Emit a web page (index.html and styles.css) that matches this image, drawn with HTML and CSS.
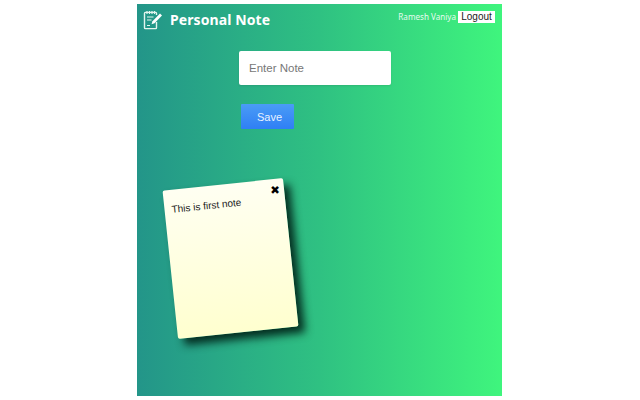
FILE: index.html
```html
<!DOCTYPE html>
<html lang="en">
<head>
<meta charset="utf-8">
<title>Personal Note</title>
<link rel="stylesheet" href="styles.css">
</head>
<body>
<main class="panel">
  <header class="top">
    <div class="brand">
      <svg class="logo" viewBox="0 0 20 20" width="20" height="20" aria-hidden="true">
        <path d="M13.5 5V3.2a.8.8 0 0 0-.8-.8H2.3a.8.8 0 0 0-.8.8v14.6a.8.8 0 0 0 .8.8h10.4a.8.8 0 0 0 .8-.8V12" fill="none" stroke="#e4f5ee" stroke-width="1.4"/>
        <path d="M4 1v3M6.5 1v3M9 1v3M11.500 1v3M4 7h6.500M4 10h4.500M4 15.500h3" fill="none" stroke="#e4f5ee" stroke-width="1.200"/>
        <path d="M17 3.500l2 2-7.500 7.800-3 1 1-3z" fill="#fff"/>
      </svg>
      <h1 class="title">Personal Note</h1>
    </div>
    <div class="user">
      <span class="name">Ramesh Vaniya</span>
      <a class="logout">Logout</a>
    </div>
  </header>
  <form class="form">
    <input class="field" type="text" placeholder="Enter Note">
    <button class="save" type="button">Save</button>
  </form>
  <article class="note">
    <span class="close">✖</span>
    <p class="text">This is first note</p>
  </article>
</main>
</body>
</html>
```
FILE: styles.css
```css
html, body { margin: 0; padding: 0; height: 400px; overflow: hidden; background: #fff; }
body { font-family: "Liberation Sans", Arial, sans-serif; }
.panel {
  box-sizing: border-box;
  width: 365px;
  height: 391.500px;
  margin: 4px 0 0 137px;
  padding: 6px 7px 0 6px;
  background: linear-gradient(to right, #239589 0%, #2fc182 50%, #3ff57d 100%);
  overflow: hidden;
}
.top { display: flex; justify-content: space-between; align-items: flex-start; }
.brand { display: flex; align-items: center; gap: 7px; height: 19px; }
.logo { display: block; }
.title {
  margin: 0;
  font-family: "Noto Sans", sans-serif;
  font-size: 14px;
  font-weight: 700;
  color: #fff;
  line-height: 19px;
  letter-spacing: 0.1px;
}
.user { display: flex; align-items: center; gap: 2px; margin-top: 1px; }
.name { font-family: "Noto Sans", sans-serif; font-size: 8.100px; color: #e6fbef; line-height: 12px; }
.logout {
  box-sizing: border-box;
  width: 37px;
  background: #fff;
  color: #222;
  font-size: 10px;
  line-height: 12px;
  text-align: center;
  font-family: "Liberation Sans", sans-serif;
}
.form {
  display: flex;
  flex-direction: column;
  align-items: flex-start;
  gap: 19px;
  margin: 22px 0 0 96px;
}
.field {
  box-sizing: border-box;
  width: 152px;
  height: 34px;
  padding: 0 10px 1px;
  border: 0;
  border-radius: 2px;
  background: #fff;
  box-shadow: 0 1px 2px rgba(0, 0, 0, .1);
  font-family: "Liberation Sans", sans-serif;
  font-size: 11.500px;
  outline: 0;
}
.field::placeholder { color: #777; opacity: 1; }
.save {
  width: 53px;
  height: 25px;
  margin-left: 2px;
  border: 0;
  border-radius: 1px;
  background: linear-gradient(to bottom, #4a9cf6, #2f7ff5);
  color: #e8f2ff;
  font-family: "Liberation Sans", sans-serif;
  font-size: 11px;
  padding: 0 0 0 4px;
}
.note {
  position: relative;
  box-sizing: border-box;
  width: 121px;
  height: 149px;
  margin: 55px 0 0 27px;
  padding: 13px 7px 0;
  background: linear-gradient(to bottom, #fffff2, #ffffcf);
  border-radius: 2px;
  box-shadow: 6px 7px 8px rgba(0, 32, 22, .9);
  transform: rotate(-6deg);
}
.close {
  position: absolute;
  top: 5px;
  right: 4px;
  font-family: "DejaVu Sans", sans-serif;
  font-size: 11.500px;
  line-height: 13px;
  color: #000;
  transform: rotate(6deg);
}
.text { margin: 0; font-size: 10px; line-height: 13px; color: #222; }
```
